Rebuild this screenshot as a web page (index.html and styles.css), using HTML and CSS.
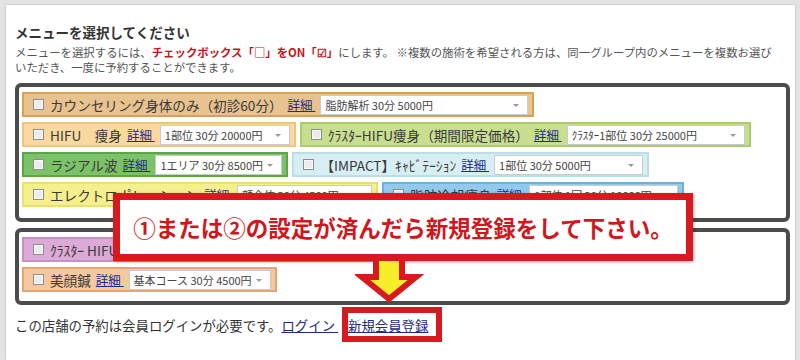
FILE: index.html
```html
<!DOCTYPE html>
<html lang="ja">
<head>
<meta charset="utf-8">
<title>メニュー選択</title>
<link rel="stylesheet" href="styles.css">
</head>
<body>
<div class="page">
  <div class="panel">
    <h2 class="title">メニューを選択してください</h2>
    <p class="desc">メニューを選択するには、<strong class="red">チェックボックス「□」をON「☑」</strong>にします。 ※複数の施術を希望される方は、同一グループ内のメニューを複数お選び<br>いただき、一度に予約することができます。</p>

    <div class="group">
      <div class="row">
        <div class="item c-counsel"><span class="cb"></span><span class="label">カウンセリング身体のみ（初診60分）</span><a class="more" href="#">詳細&nbsp;</a><span class="sel w208">脂肪解析 30分 5000円</span></div>
      </div>
      <div class="row">
        <div class="item c-hifu"><span class="cb"></span><span class="label">HIFU　痩身</span><a class="more" href="#">詳細&nbsp;</a><span class="sel w130">1部位 30分 20000円</span></div>
        <div class="item c-cluster"><span class="cb"></span><span class="label">ｸﾗｽﾀｰHIFU痩身（期間限定価格）</span><a class="more" href="#">詳細&nbsp;</a><span class="sel w178">ｸﾗｽﾀｰ1部位 30分 25000円</span></div>
      </div>
      <div class="row">
        <div class="item c-radial"><span class="cb"></span><span class="label">ラジアル波</span><a class="more" href="#">詳細&nbsp;</a><span class="sel w127">1エリア 30分 8500円</span></div>
        <div class="item c-impact"><span class="cb"></span><span class="label">【IMPACT】ｷｬﾋﾞﾃｰｼｮﾝ</span><a class="more" href="#">詳細&nbsp;</a><span class="sel w149">1部位 30分 5000円</span></div>
      </div>
      <div class="row">
        <div class="item c-electro"><span class="cb"></span><span class="label">エレクトロポレーション</span><a class="more" href="#">詳細&nbsp;</a><span class="sel w135">顔全体 30分 4500円</span></div>
        <div class="item c-cool"><span class="cb"></span><span class="label">脂肪冷却痩身</span><a class="more" href="#">詳細&nbsp;</a><span class="sel w149">1部位 1回 30分 10000円</span></div>
      </div>
    </div>

    <div class="group">
      <div class="row">
        <div class="item c-pink"><span class="cb"></span><span class="label">ｸﾗｽﾀｰ HIFU フェイシャル</span><a class="more" href="#">詳細&nbsp;</a><span class="sel w149">全顔 30分 30000円</span></div>
      </div>
      <div class="row">
        <div class="item c-face"><span class="cb"></span><span class="label">美顔鍼</span><a class="more" href="#">詳細&nbsp;</a><span class="sel w142">基本コース 30分 4500円</span></div>
      </div>
    </div>

    <p class="footer">この店舗の予約は会員ログインが必要です。<a class="link" href="#">ログイン&nbsp;</a><a class="link reg" href="#">新規会員登録</a></p>
  </div>

  <div class="banner">①または②の設定が済んだら新規登録をして下さい。</div>
  <svg class="arrow" width="70" height="62" viewBox="0 0 70 62">
    <polygon points="21,13 21,32 7,32 34,54 61,32 47,32 47,13" fill="#f7ee2a" stroke="#d61a20" stroke-width="6" stroke-linejoin="miter"/>
  </svg>
  <div class="highlight"></div>
</div>
</body>
</html>
```

FILE: styles.css
```css
* { box-sizing: border-box; }

body {
  margin: 0;
  background: #e3e3e3;
  font-family: "Noto Sans CJK JP", "Noto Sans", sans-serif;
  color: #333;
}

.page {
  position: relative;
  width: 800px;
  height: 360px;
  overflow: hidden;
}

.panel {
  margin: 5px 5px 0 6px;
  height: 355px;
  background: #fff;
  padding: 18px 5px 0 9px;
  box-shadow: 0 0 2px rgba(0, 0, 0, 0.25);
}

.title {
  margin: 0;
  font-size: 13.5px;
  line-height: 18px;
  font-weight: 700;
  color: #333;
}

.desc {
  margin: 4px 0 8px;
  font-size: 11.4px;
  line-height: 15px;
  color: #555;
  white-space: nowrap;
}

.red {
  color: #c4161c;
  font-weight: 700;
}

.group {
  border: 4px solid #4b4b4b;
  border-radius: 6px;
  padding: 5px 4px 11px 3px;
  display: flex;
  flex-direction: column;
  gap: 5px;
}

.group + .group {
  margin-top: 6px;
  padding-bottom: 9px;
}

.row {
  display: flex;
  gap: 4px;
}

.item {
  display: flex;
  align-items: center;
  height: 25px;
  border: 2px solid;
  padding: 0 4px 0 9px;
  white-space: nowrap;
}

.cb {
  width: 11px;
  height: 11px;
  border: 1px solid #8d8d8d;
  background: #ececec;
  box-shadow: inset 0 0 0 1px #fafafa;
  margin-right: 6px;
  flex: none;
}

.label {
  font-size: 13.6px;
  line-height: 18px;
  color: #3a3a3a;
}

.more {
  margin-left: 5px;
  font-size: 12.5px;
  line-height: 16px;
  color: #232a8e;
  text-decoration: underline;
}

.sel {
  position: relative;
  margin-left: 5px;
  height: 20px;
  background: #fff;
  border: 1px solid #cbcbcb;
  font-size: 11px;
  line-height: 18px;
  color: #444;
  padding: 0 16px 0 4px;
  overflow: hidden;
}

.sel::after {
  content: "";
  position: absolute;
  right: 8px;
  top: 8px;
  border-left: 3px solid transparent;
  border-right: 3px solid transparent;
  border-top: 3px solid #9a9a9a;
}

.w208 { width: 208px; }
.w130 { width: 130px; }
.w178 { width: 178px; }
.w127 { width: 127px; }
.w149 { width: 149px; }
.w135 { width: 135px; }
.w142 { width: 142px; }

.c-counsel { background: #e8c28f; border-color: #d9a05a; }
.c-hifu    { background: #f9d9a0; border-color: #efc47e; }
.c-cluster { background: #c9df90; border-color: #abcb6c; }
.c-radial  { background: #7cc268; border-color: #5aa648; }
.c-impact  { background: #d7eef2; border-color: #badfe7; }
.c-electro { background: #f6ef8e; border-color: #ebe06c; }
.c-cool    { background: #93c9ec; border-color: #6eafde; }
.c-pink    { background: #dcaad6; border-color: #c990c3; }
.c-face    { background: #f6c89d; border-color: #e6a76e; }

.footer {
  margin: 10px 0 0;
  font-size: 13.4px;
  line-height: 20px;
  color: #333;
}

.link {
  color: #1e2a84;
  text-decoration: underline;
}

.reg {
  margin-left: 10px;
}

.banner {
  position: absolute;
  left: 113px;
  top: 193px;
  width: 580px;
  height: 68px;
  border: 7px solid #d61a20;
  background: #fff;
  box-shadow: 1px 1px 3px rgba(0, 0, 0, 0.35);
  display: flex;
  align-items: center;
  justify-content: center;
  font-size: 22.5px;
  font-weight: 700;
  color: #d0171d;
}

.arrow {
  position: absolute;
  left: 355px;
  top: 245px;
}

.highlight {
  position: absolute;
  left: 342px;
  top: 307px;
  width: 100px;
  height: 35px;
  border: 6px solid #d61a20;
  pointer-events: none;
}
```
